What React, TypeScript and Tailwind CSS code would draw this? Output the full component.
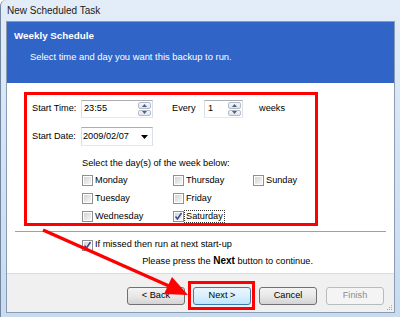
import React from 'react';

const Spinner = () => (
  <div className="flex flex-col w-[14px] h-full gap-px py-px pr-px">
    <div className="flex-1 flex items-center justify-center border border-[#b3bcc8] rounded-[2px] bg-gradient-to-b from-[#f4f6f9] to-[#dfe5ec]">
      <svg width="5" height="3" viewBox="0 0 5 3"><path d="M0 3L2.5 0L5 3Z" fill="#4d6185" /></svg>
    </div>
    <div className="flex-1 flex items-center justify-center border border-[#b3bcc8] rounded-[2px] bg-gradient-to-b from-[#f4f6f9] to-[#dfe5ec]">
      <svg width="5" height="3" viewBox="0 0 5 3"><path d="M0 0L2.5 3L5 0Z" fill="#4d6185" /></svg>
    </div>
  </div>
);

const CheckBox = ({ checked = false }: { checked?: boolean }) => (
  <div className="w-[11px] h-[11px] border border-[#8f8f8f] bg-white p-px shrink-0">
    <div className="w-full h-full bg-gradient-to-br from-[#d4d4d4] to-[#f7f7f7] relative">
      {checked && (
        <svg className="absolute -left-px -top-px" width="9" height="9" viewBox="0 0 9 9">
          <path d="M1.5 4.5L3.5 7L7.5 1" stroke="#31478f" strokeWidth="1.4" fill="none" />
        </svg>
      )}
    </div>
  </div>
);

const Day = ({ label, checked, focus }: { label: string; checked?: boolean; focus?: boolean }) => (
  <div className="flex items-center h-[14px]">
    <CheckBox checked={checked} />
    <span className={`ml-px px-px leading-[11px] ${focus ? 'outline outline-1 outline-dotted outline-[#333]' : ''}`}>{label}</span>
  </div>
);

const Button = ({ children, primary, disabled }: { children: React.ReactNode; primary?: boolean; disabled?: boolean }) => {
  const cls = disabled
    ? 'border-[#b8bcc0] bg-[#f4f4f4] text-[#8d8d8d]'
    : primary
    ? 'border-[#3d7bad] bg-gradient-to-b from-[#eaf6fd] via-[#d9f0fc] to-[#bee6fd] text-black'
    : 'border-[#707070] bg-gradient-to-b from-[#f3f3f3] via-[#e8e8e8] to-[#d4d4d4] text-black';
  return (
    <div className={`w-[58px] h-[18px] border rounded-[3px] flex items-center justify-center ${cls}`}>
      {children}
    </div>
  );
};

export default function App() {
  return (
    <div className="relative w-[400px] h-[317px] overflow-hidden bg-gradient-to-b from-[#e3edf8] via-[#d3e3f4] to-[#c8dbef] border-l border-[#71869f] rounded-tl-[6px] font-['Liberation_Sans',Arial,sans-serif] text-[9.2px] text-black">
      <div className="h-[21px] pl-[6px] flex items-center text-[10px] text-[#1a1a1a]">New Scheduled Task</div>

      <div className="mx-[5px] h-[292px] border border-[#8a9cb4] bg-white flex flex-col">
        <div className="h-[61px] bg-[#3064c7] text-white pt-[8px]">
          <div className="pl-[7px] font-bold text-[9.8px] leading-[12px]">Weekly Schedule</div>
          <div className="pl-[23px] mt-[9px] leading-[12px] text-[9.4px]">Select time and day you want this backup to run.</div>
        </div>

        <div className="flex-1 flex flex-col">
          <div className="ml-[17px] mt-[9px] w-[294px] h-[134px] border-[3px] border-[#ff0000] pl-[5px] pt-[5px]">
            <div className="flex items-center h-[18px]">
              <span className="w-[49px]">Start Time:</span>
              <div className="w-[72px] h-full flex border border-[#abadb3] border-l-[#dbdfe6] border-r-[#dbdfe6] border-b-[#e3e9ef]">
                <span className="flex-1 pl-[2px] flex items-center">23:55</span>
                <Spinner />
              </div>
              <span className="ml-[19px] w-[32px]">Every</span>
              <div className="w-[39px] h-full flex border border-[#abadb3] border-l-[#dbdfe6] border-r-[#dbdfe6] border-b-[#e3e9ef]">
                <span className="flex-1 pl-[3px] flex items-center">1</span>
                <Spinner />
              </div>
              <span className="ml-[16px]">weeks</span>
            </div>

            <div className="flex items-center h-[19px] mt-[9px]">
              <span className="w-[49px]">Start Date:</span>
              <div className="w-[72px] h-full flex items-center border border-[#abadb3] border-l-[#dbdfe6] border-r-[#dbdfe6] border-b-[#e3e9ef]">
                <span className="flex-1 pl-px">2009/02/07</span>
                <svg className="mr-[4px]" width="7" height="4" viewBox="0 0 7 4"><path d="M0 0H7L3.5 4Z" fill="#000" /></svg>
              </div>
            </div>

            <div className="ml-[50px] mt-[11px] leading-[12px]">Select the day(s) of the week below:</div>

            <div className="ml-[50px] mt-[4px] grid grid-cols-[91px_80px_1fr] gap-y-[4px]">
              <Day label="Monday" />
              <Day label="Thursday" />
              <Day label="Sunday" />
              <Day label="Tuesday" />
              <Day label="Friday" />
              <div />
              <Day label="Wednesday" />
              <Day label="Saturday" checked focus />
            </div>
          </div>

          <div className="mx-[8px] mt-[5px] border-t border-[#a0a0a0] border-b border-b-white" />

          <div className="ml-[75px] mt-[5px] flex items-center h-[14px]">
            <CheckBox checked />
            <span className="ml-[2px]">If missed then run at next start-up</span>
          </div>

          <div className="flex justify-end pr-[81px] mt-[3px] leading-[12px]">
            <span>Please press the <b className="text-[10px]">Next</b> button to continue.</span>
          </div>
        </div>

        <div className="h-[39px] bg-[#f0f0f0] border-t border-[#dcdcdc] flex items-start pt-[7px] pl-[120px] relative">
          <div className="mt-[6px]"><Button>&lt; Back</Button></div>
          <div className="ml-[3px] border-[3px] border-[#ff0000] pl-[2px] pr-px pt-[3px] pb-[2px]">
            <Button primary>Next &gt;</Button>
          </div>
          <div className="ml-[4px] mt-[6px]"><Button>Cancel</Button></div>
          <div className="ml-[9px] mt-[6px]"><Button disabled>Finish</Button></div>
          <svg className="absolute right-px bottom-px" width="7" height="7" viewBox="0 0 7 7">
            <rect x="5" y="1" width="1" height="1" fill="#a8a8a8" />
            <rect x="3" y="3" width="1" height="1" fill="#a8a8a8" />
            <rect x="5" y="3" width="1" height="1" fill="#a8a8a8" />
            <rect x="1" y="5" width="1" height="1" fill="#a8a8a8" />
            <rect x="3" y="5" width="1" height="1" fill="#a8a8a8" />
            <rect x="5" y="5" width="1" height="1" fill="#a8a8a8" />
          </svg>
        </div>
      </div>

      <svg className="absolute left-0 top-0 pointer-events-none" width="400" height="317" viewBox="0 0 400 317">
        <line x1="42" y1="230" x2="168" y2="286" stroke="#ff0000" strokeWidth="3.5" />
        <polygon points="187,295 163,294 171,277" fill="#ff0000" />
      </svg>
    </div>
  );
}
